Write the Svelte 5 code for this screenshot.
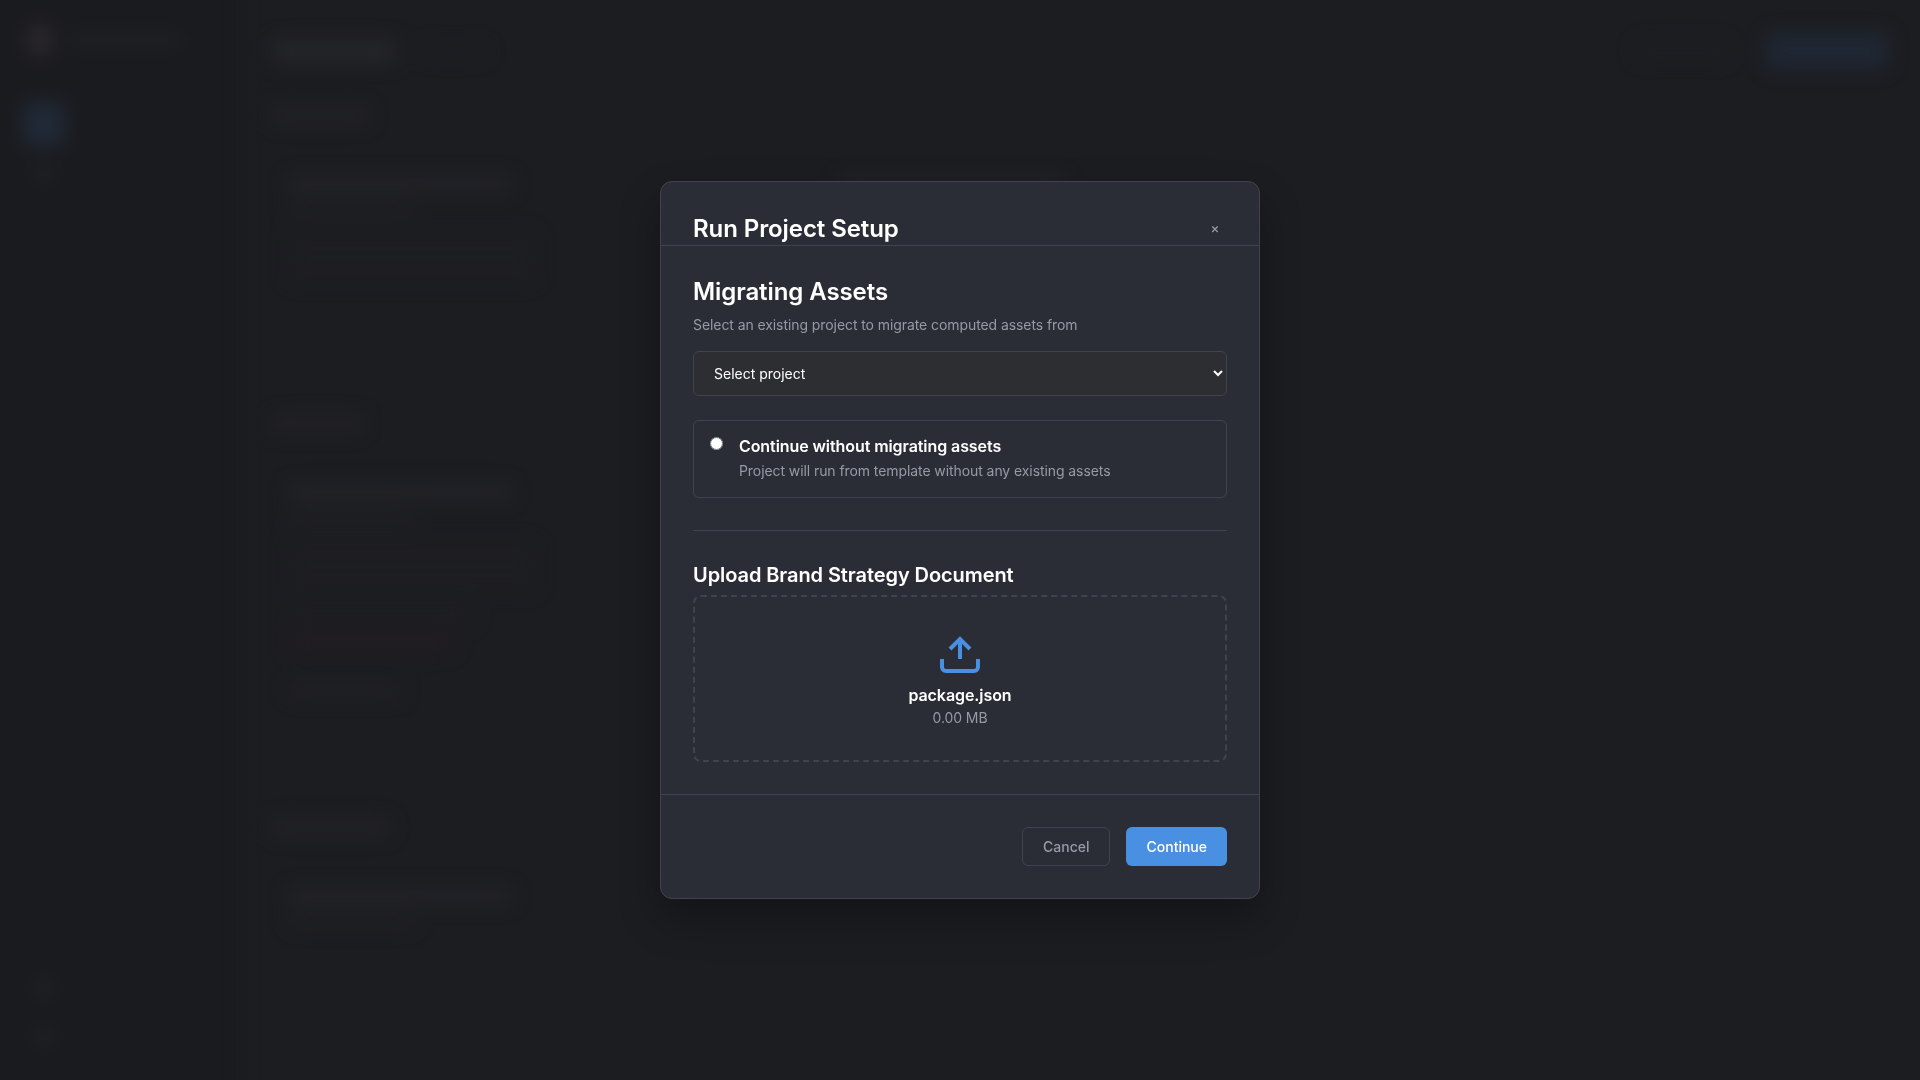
<script lang="ts">
  type Line = { w: number; h: number; mt: number; tone: string };
  type Section = { title: number; tail: number; cards: Line[][] };

  const base: Line[] = [
    { w: 222, h: 16, mt: 0, tone: 'bright' },
    { w: 126, h: 12, mt: 11, tone: 'dim' }
  ];
  const meta: Line[] = [
    { w: 246, h: 22, mt: 19, tone: 'faint' },
    { w: 246, h: 22, mt: 4, tone: 'faint' }
  ];
  const status: Line[] = [
    { w: 184, h: 22, mt: 12, tone: 'faint' },
    { w: 164, h: 20, mt: 8, tone: 'red' },
    { w: 112, h: 16, mt: 30, tone: 'dim' }
  ];

  const sections: Section[] = [
    { title: 96, tail: 133, cards: [[...base, ...meta], base] },
    { title: 90, tail: 121, cards: [[...base, ...meta, ...status]] },
    { title: 118, tail: 0, cards: [base] }
  ];

  let selected = $state('');
</script>

<div class="app" aria-hidden="true">
  <aside>
    <div class="brand"><i class="logo"></i><i class="bar dim brand-name"></i></div>
    <div class="nav"><i class="nav-item"></i><i class="dot"></i></div>
    <div class="nav bottom"><i class="dot"></i><i class="dot"></i></div>
  </aside>
  <main>
    <div class="topbar">
      <i class="bar title"></i><i class="bar faint count"></i>
      <span class="spacer"></span>
      <i class="bar faint link"></i><i class="action"></i>
    </div>
    {#each sections as s}
      <section style:margin-bottom="{s.tail}px">
        <i class="bar heading" style:width="{s.title}px"></i>
        <div class="cards">
          {#each s.cards as card}
            <div class="card">
              {#each card as l}
                <i class="bar {l.tone}" style:width="{l.w}px" style:height="{l.h}px" style:margin-top="{l.mt}px"></i>
              {/each}
            </div>
          {/each}
        </div>
      </section>
    {/each}
  </main>
</div>

<div class="overlay">
  <div class="modal" role="dialog" aria-labelledby="setup-title">
    <header>
      <h2 id="setup-title">Run Project Setup</h2>
      <button class="close" aria-label="Close">×</button>
    </header>
    <div class="body">
      <h2>Migrating Assets</h2>
      <p class="hint">Select an existing project to migrate computed assets from</p>
      <select bind:value={selected}>
        <option value="">Select project</option>
      </select>
      <label class="choice">
        <input type="radio" name="migration" />
        <span class="choice-text">
          <strong>Continue without migrating assets</strong>
          <span>Project will run from template without any existing assets</span>
        </span>
      </label>
      <hr />
      <h3>Upload Brand Strategy Document</h3>
      <div class="drop">
        <svg width="48" height="48" viewBox="0 0 24 24" fill="none" stroke="currentColor" stroke-width="2">
          <path d="M21 15v4a2 2 0 0 1-2 2H5a2 2 0 0 1-2-2v-4" />
          <path d="M17 10l-5-5-5 5" />
          <path d="M12 5v10" />
        </svg>
        <strong>package.json</strong>
        <span>0.00 MB</span>
      </div>
    </div>
    <footer>
      <button class="btn cancel">Cancel</button>
      <button class="btn primary">Continue</button>
    </footer>
  </div>
</div>

<style>
  :global(body) {
    margin: 0;
    overflow: hidden;
    background: #1c1d21;
    font-family: Inter, 'Liberation Sans', sans-serif;
    letter-spacing: -0.08px;
    color: #fff;
  }
  * { box-sizing: border-box; }

  /* Page behind the dialog */
  .app { display: flex; width: 100vw; height: 100vh; filter: blur(9px); }
  .app i { display: block; flex: none; }
  aside {
    display: flex;
    flex-direction: column;
    width: 270px;
    margin: -30px 0 -30px -30px;
    padding: 50px 24px 63px 54px;
    background: #1a1b1f;
  }
  .brand { display: flex; align-items: center; gap: 16px; height: 40px; }
  .logo { width: 28px; height: 34px; margin-left: 2px; border-radius: 10px; background: #28262a; }
  .brand-name { width: 110px; height: 14px; }
  .nav { display: flex; flex-direction: column; align-items: center; gap: 17px; width: 40px; margin-top: 42px; }
  .nav.bottom { gap: 29px; margin-top: auto; }
  .nav-item { width: 42px; height: 44px; border-radius: 8px; background: #202936; }
  .dot { width: 20px; height: 20px; border-radius: 10px; background: #202125; }
  main { flex: 1; padding: 32px; }
  .topbar { display: flex; align-items: center; height: 38px; margin-bottom: 37px; }
  .spacer { flex: 1; }
  .bar { border-radius: 5px; }
  .title { width: 124px; height: 24px; background: #242529; }
  .count { width: 66px; height: 12px; margin-left: 24px; }
  .link { width: 92px; height: 16px; margin-right: 38px; }
  .action { width: 122px; height: 36px; border-radius: 6px; background: #1f2733; }
  .heading { height: 17px; background: #212226; }
  .cards { display: flex; margin-top: 52px; }
  .card { width: 552px; padding-left: 17px; }
  .bright { background: #222327; }
  .dim { background: #1f2024; }
  .faint { background: #1d1e22; }
  .red { background: #201d21; }

  /* Dialog */
  .overlay { position: fixed; inset: 0; display: flex; align-items: center; justify-content: center; }
  .modal {
    width: 600px;
    background: #2b2d36;
    border: 1px solid #404250;
    border-radius: 12px;
    box-shadow: 0 20px 40px rgba(0, 0, 0, 0.3);
  }
  header {
    display: flex;
    align-items: flex-start;
    justify-content: space-between;
    height: 64px;
    padding: 32px 32px 0;
    border-bottom: 1px solid #404250;
  }
  h2, h3, p { margin: 0; }
  h2 { font-size: 24px; font-weight: 600; line-height: 29px; }
  button { font-family: inherit; cursor: pointer; }
  .close {
    width: 24px;
    height: 27px;
    padding: 0;
    border: 0;
    background: none;
    color: #9799a5;
    font-size: 13.333px;
    font-weight: 500;
  }
  .body { padding: 31px 32px 32px; }
  .hint { margin-top: 9px; font-size: 14px; line-height: 20px; color: #9799a5; }
  select {
    display: block;
    width: 100%;
    height: 45px;
    margin-top: 16px;
    padding: 12px 16px;
    border: 1px solid #404250;
    border-radius: 6px;
    background: #2d2e32;
    color: #fff;
    font: 14px Inter, sans-serif;
  }
  .choice {
    display: flex;
    align-items: flex-start;
    gap: 16px;
    height: 78px;
    margin-top: 24px;
    padding: 16px;
    border: 1px solid #404250;
    border-radius: 6px;
  }
  input { width: 13px; height: 13px; margin: 0; }
  .choice-text { display: flex; flex-direction: column; }
  .choice-text strong { font-size: 16px; font-weight: 600; line-height: 19px; }
  .choice-text span { margin-top: 5px; font-size: 14px; line-height: 19px; color: #9799a5; }
  hr { height: 1px; margin: 32px 0; border: 0; background: #404250; }
  h3 { font-size: 20px; font-weight: 600; line-height: 24px; }
  .drop {
    display: flex;
    flex-direction: column;
    align-items: center;
    height: 167px;
    margin-top: 8px;
    padding: 32px;
    border: 2px dashed #404250;
    border-radius: 8px;
  }
  svg { display: block; flex: none; color: #4a90e2; }
  .drop strong { margin-top: 9px; font-size: 16px; font-weight: 600; line-height: 19px; }
  .drop span { margin-top: 4px; font-size: 14px; line-height: 17px; color: #9799a5; }
  footer {
    display: flex;
    justify-content: flex-end;
    gap: 16px;
    padding: 32px;
    border-top: 1px solid #404250;
  }
  .btn {
    height: 39px;
    padding: 0 20px;
    border: 1px solid #404250;
    border-radius: 6px;
    background: none;
    color: #9799a5;
    font-size: 14px;
    font-weight: 500;
  }
  .primary { border: 0; background: #4a90e2; color: #fff; }
</style>
